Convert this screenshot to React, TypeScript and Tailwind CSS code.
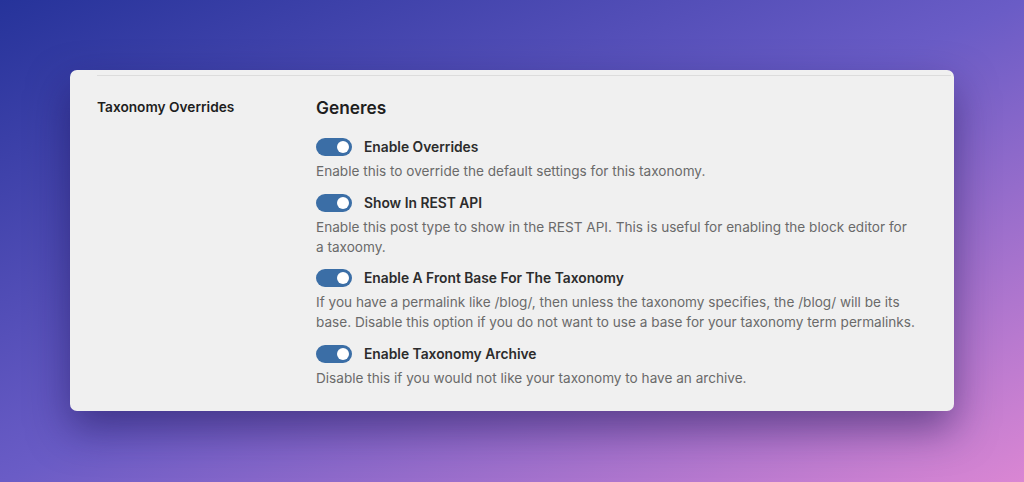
const settings = [
  {
    label: 'Enable Overrides',
    help: 'Enable this to override the default settings for this taxonomy.',
  },
  {
    label: 'Show In REST API',
    help: 'Enable this post type to show in the REST API. This is useful for enabling the block editor for a\u00a0taxoomy.',
  },
  {
    label: 'Enable A Front Base For The Taxonomy',
    help: 'If you have a permalink like /blog/, then unless the taxonomy specifies, the /blog/ will be its base. Disable this option if you do not want to use a base for your taxonomy term permalinks.',
  },
  {
    label: 'Enable Taxonomy Archive',
    help: 'Disable this if you would not like your taxonomy to have an archive.',
  },
];

const Toggle = () => (
  <span className="relative inline-flex h-[18px] w-[36px] shrink-0 items-center rounded-full bg-[#3b6ea6]">
    <span className="absolute right-[3px] h-[12px] w-[12px] rounded-full bg-white" />
  </span>
);

export default function App() {
  return (
    <div
      className="flex h-[482px] w-full justify-center bg-[linear-gradient(to_bottom_right,#26339a_0%,#6a5cc6_50%,#da86d3_100%)] pt-[70px]"
      style={{ fontFamily: 'Inter, "Noto Sans", sans-serif' }}
    >
      <div className="h-[341px] w-[884px] rounded-[7px] bg-[#f0f0f0] shadow-[0_18px_40px_rgba(25,15,80,0.5)]">
        <div className="ml-[27px] mr-[3px] mt-[5px] h-px bg-[#dcdcdc]" />
        <div className="flex pl-[27px] pt-[20px]">
          <div className="w-[219px] pt-[1px] text-[13.7px] font-semibold leading-5 text-[#1e1e1e]">
            Taxonomy Overrides
          </div>
          <div className="w-[614px]">
            <h2 className="text-[17.3px] font-semibold leading-6 text-[#1e1e1e]">Generes</h2>
            <div className="mt-[17px] flex flex-col gap-[11.5px]">
              {settings.map((s) => (
                <div key={s.label}>
                  <div className="flex items-center gap-[12px]">
                    <Toggle />
                    <span className="text-[13.8px] font-semibold leading-5 text-[#2c2c2c]">{s.label}</span>
                  </div>
                  <p className="mt-[4px] text-[13.6px] leading-5 text-[#6a6a6a]">{s.help}</p>
                </div>
              ))}
            </div>
          </div>
        </div>
      </div>
    </div>
  );
}
